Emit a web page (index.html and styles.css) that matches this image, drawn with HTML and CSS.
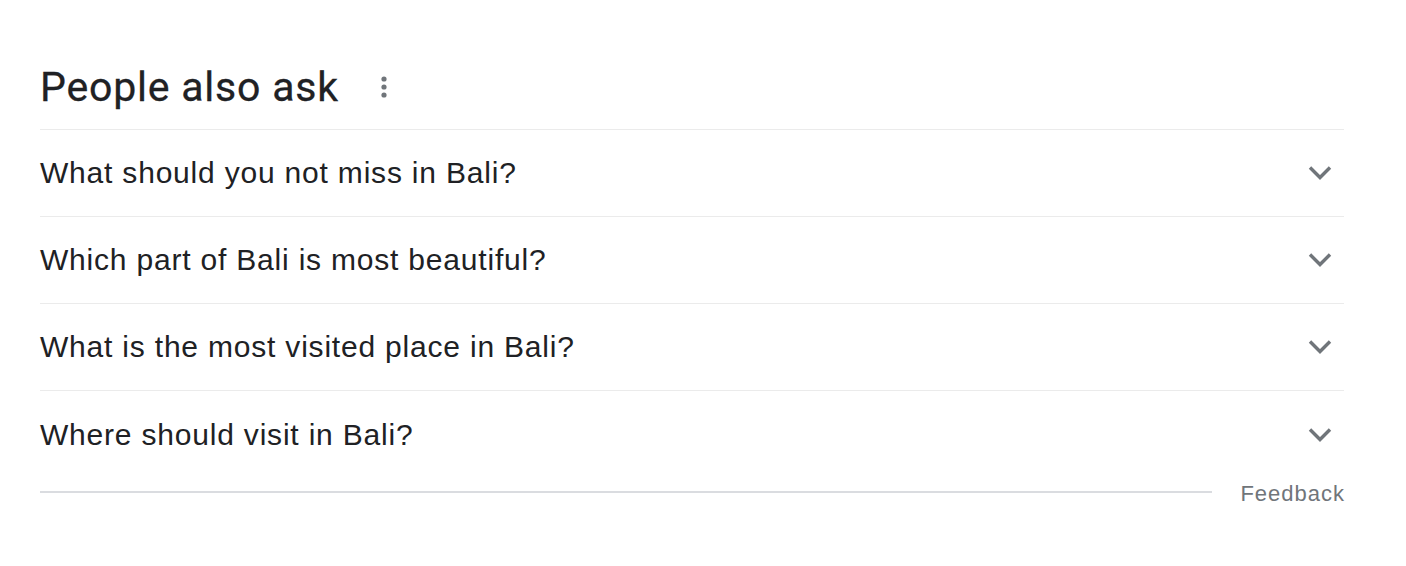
FILE: index.html
```html
<!DOCTYPE html>
<html>
<head>
<meta charset="utf-8">
<link rel="stylesheet" href="styles.css">
</head>
<body>
<div class="paa">
  <div class="header">
    <h2 class="title">People also ask</h2>
    <button class="more" aria-label="More options">
      <svg width="6" height="22" viewBox="0 0 6 22"><circle cx="3" cy="3" r="2.6" fill="#70757a"/><circle cx="3" cy="11" r="2.6" fill="#70757a"/><circle cx="3" cy="19" r="2.6" fill="#70757a"/></svg>
    </button>
  </div>
  <div class="list">
    <div class="row"><span class="q">What should you not miss in Bali?</span><svg class="chev" width="24" height="16" viewBox="0 0 24 16"><path d="M2 2.5l10 10 10-10" fill="none" stroke="#70757a" stroke-width="3.4"/></svg></div>
    <div class="row"><span class="q">Which part of Bali is most beautiful?</span><svg class="chev" width="24" height="16" viewBox="0 0 24 16"><path d="M2 2.5l10 10 10-10" fill="none" stroke="#70757a" stroke-width="3.4"/></svg></div>
    <div class="row"><span class="q">What is the most visited place in Bali?</span><svg class="chev" width="24" height="16" viewBox="0 0 24 16"><path d="M2 2.5l10 10 10-10" fill="none" stroke="#70757a" stroke-width="3.4"/></svg></div>
    <div class="row"><span class="q">Where should visit in Bali?</span><svg class="chev" width="24" height="16" viewBox="0 0 24 16"><path d="M2 2.5l10 10 10-10" fill="none" stroke="#70757a" stroke-width="3.4"/></svg></div>
  </div>
  <div class="footer">
    <div class="rule"></div>
    <span class="feedback">Feedback</span>
  </div>
</div>
</body>
</html>
```
FILE: styles.css
```css
html, body { margin: 0; padding: 0; background: #fff; }
body { font-family: "Liberation Sans", Arial, sans-serif; color: #202124; }
.paa { width: 1304px; margin-left: 40px; padding-top: 58px; }
.header { display: flex; align-items: center; height: 72px; border-bottom: 1px solid #ebebeb; box-sizing: border-box; padding-bottom: 14px; }
.title { margin: 0; font-family: Roboto, "Open Sans", sans-serif; font-weight: 400; font-size: 41px; line-height: 48px; color: #202124; letter-spacing: 0.8px; -webkit-text-stroke: 0.3px #202124; }
.more { border: 0; background: none; padding: 0; margin-left: 42px; display: flex; align-items: center; margin-top: 0; }
.row { display: flex; align-items: center; justify-content: space-between; height: 87px; border-bottom: 1px solid #ebebeb; box-sizing: border-box; }
.row:last-child { border-bottom: 0; }
.q { font-size: 30px; line-height: 36px; letter-spacing: 0.8px; }
.chev { margin-right: 12px; }
.footer { display: flex; align-items: center; height: 30px; margin-top: 1px; }
.rule { flex: 1; height: 2px; background: #dadce0; margin-top: -4px; }
.feedback { margin-left: 28px; font-size: 22px; letter-spacing: 1px; color: #70757a; margin-right: -1px; }
```
